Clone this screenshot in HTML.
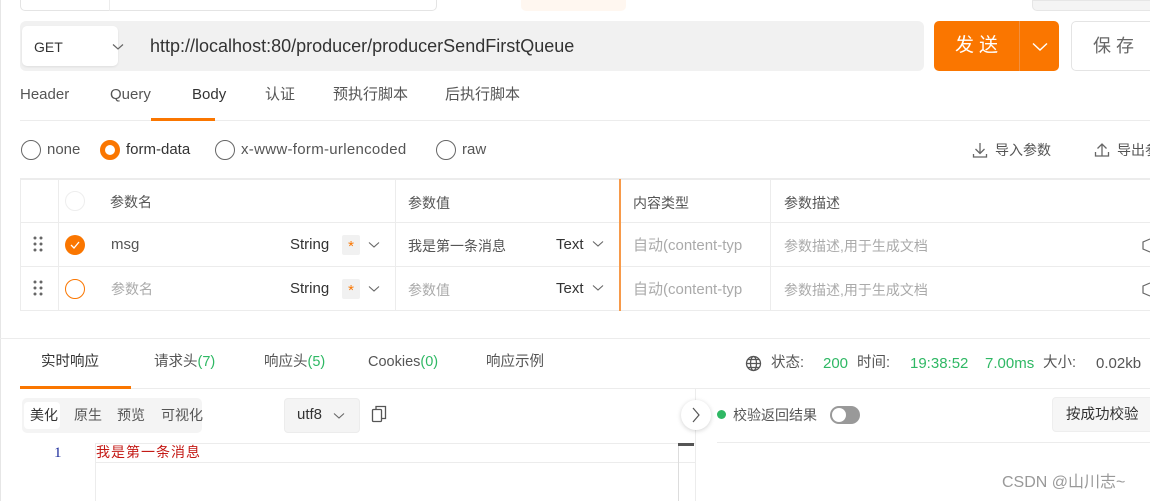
<!DOCTYPE html>
<html><head><meta charset="utf-8"><style>
*{margin:0;padding:0;box-sizing:border-box}
body{width:1150px;height:501px;overflow:hidden;background:#fff;position:relative;font-family:"Liberation Sans","Noto Sans CJK SC",sans-serif;color:#333}
.a{position:absolute;white-space:nowrap;line-height:20px}
.t{font-size:15px;color:#555}
.g{color:#2fb864}
.radio{position:absolute;width:20px;height:20px;border:1.5px solid #666;border-radius:50%}
.hl{position:absolute;height:1px;background:#ececec}
.vl{position:absolute;width:1px;background:#ececec}
.star{position:absolute;width:18px;height:20px;background:#f1f1f1;border-radius:2px;color:#fa7600;font-size:15px;text-align:center;line-height:24px}
.ph{color:#aaa}
</style></head><body>
<div class="vl" style="left:0;top:0;height:501px;background:#e6e6e6"></div>
<div class="a" style="left:20px;top:-6px;width:417px;height:17px;border:1px solid #e4e4e4;border-radius:5px"></div>
<div class="vl" style="left:109px;top:0;height:11px"></div>
<div class="a" style="left:521px;top:0;width:105px;height:11px;background:#fff7f0;border-radius:0 0 5px 5px"></div>
<div class="a" style="left:1032px;top:0;width:130px;height:11px;background:#f4f4f4;border:1px solid #e6e6e6;border-radius:0 0 5px 5px"></div>
<!-- url bar -->
<div class="a" style="left:20px;top:21px;width:904px;height:50px;background:#f1f1f1;border-radius:6px"></div>
<div class="a" style="left:22px;top:26px;width:96px;height:40px;background:#fff;border-radius:5px;box-shadow:0 1px 2px rgba(0,0,0,.08)"></div>
<div class="a" style="left:34px;top:37px;font-size:14px;color:#333">GET</div>
<svg class="a" style="left:112px;top:43px" width="12" height="8"><path d="M1 1.5L6 6L11 1.5" fill="none" stroke="#666" stroke-width="1.2"/></svg>
<div class="a" style="left:150px;top:36px;font-size:18px;color:#333">http://localhost:80/producer/producerSendFirstQueue</div>
<div class="a" style="left:934px;top:21px;width:125px;height:50px;background:#fa7600;border-radius:5px"></div>
<div class="a" style="left:1019px;top:21px;width:1px;height:50px;background:#f19040"></div>
<div class="a" style="left:955px;top:36px;font-size:19px;color:#fff;letter-spacing:5px">发送</div>
<svg class="a" style="left:1032px;top:42px" width="16" height="10"><path d="M1 1.5L8 8L15 1.5" fill="none" stroke="#fff" stroke-width="1.4"/></svg>
<div class="a" style="left:1071px;top:21px;width:100px;height:50px;border:1px solid #e4e4e4;border-radius:5px"></div>
<div class="a" style="left:1093px;top:36px;font-size:18px;color:#666;letter-spacing:5px">保存</div>
<!-- tabs -->
<div class="a t" style="left:20px;top:85px">Header</div>
<div class="a t" style="left:110px;top:85px">Query</div>
<div class="a t" style="left:192px;top:85px;color:#333">Body</div>
<div class="a t" style="left:265px;top:85px">认证</div>
<div class="a t" style="left:333px;top:85px">预执行脚本</div>
<div class="a t" style="left:445px;top:85px">后执行脚本</div>
<div class="hl" style="left:20px;top:120px;width:1130px"></div>
<div class="a" style="left:151px;top:118px;width:64px;height:3px;background:#fa7600"></div>
<!-- radios -->
<div class="radio" style="left:21px;top:140px"></div>
<div class="a t" style="left:47px;top:140px">none</div>
<div class="radio" style="left:100px;top:140px;border:5px solid #fa7600"></div>
<div class="a t" style="left:126px;top:140px;color:#333">form-data</div>
<div class="radio" style="left:215px;top:140px"></div>
<div class="a t" style="left:241px;top:140px;letter-spacing:0.3px">x-www-form-urlencoded</div>
<div class="radio" style="left:436px;top:140px"></div>
<div class="a t" style="left:462px;top:140px">raw</div>
<svg class="a" style="left:972px;top:142px" width="16" height="16"><path d="M8 1V11M3.5 7L8 11.5L12.5 7M1.5 12V15H14.5V12" fill="none" stroke="#666" stroke-width="1.3"/></svg>
<div class="a" style="left:995px;top:140px;font-size:14px;color:#555">导入参数</div>
<svg class="a" style="left:1094px;top:141px" width="16" height="16"><path d="M8 15V4M3.5 7.5L8 3L12.5 7.5M1.5 11V15H14.5V11" fill="none" stroke="#666" stroke-width="1.3"/></svg>
<div class="a" style="left:1117px;top:140px;font-size:14px;color:#555">导出参数</div>
<div class="hl" style="left:20px;top:178px;width:1130px"></div>
<!-- table -->
<div class="a" style="left:20px;top:179px;width:1140px;height:132px;border:1px solid #ececec"></div>
<div class="hl" style="left:20px;top:222px;width:1130px"></div>
<div class="hl" style="left:20px;top:266px;width:1130px"></div>
<div class="vl" style="left:58px;top:179px;height:132px"></div>
<div class="vl" style="left:395px;top:179px;height:132px"></div>
<div class="a" style="left:619px;top:179px;width:2px;height:132px;background:#f79a4a"></div>
<div class="vl" style="left:770px;top:179px;height:132px"></div>
<div class="radio" style="left:65px;top:191px;border:1px solid #eee"></div>
<div class="a" style="left:110px;top:192px;font-size:14px;color:#555">参数名</div>
<div class="a" style="left:408px;top:193px;font-size:14px;color:#555">参数值</div>
<div class="a" style="left:633px;top:193px;font-size:14px;color:#555">内容类型</div>
<div class="a" style="left:784px;top:193px;font-size:14px;color:#555">参数描述</div>
<!-- row1 -->
<svg class="a" style="left:33px;top:236px" width="10" height="16"><g fill="#666"><circle cx="2" cy="2" r="1.5"/><circle cx="8" cy="2" r="1.5"/><circle cx="2" cy="8" r="1.5"/><circle cx="8" cy="8" r="1.5"/><circle cx="2" cy="14" r="1.5"/><circle cx="8" cy="14" r="1.5"/></g></svg>
<div class="a" style="left:65px;top:235px;width:20px;height:20px;border-radius:50%;background:#fa7600"></div>
<svg class="a" style="left:69px;top:240px" width="12" height="10"><path d="M2 5L5 8L10 2" fill="none" stroke="#fff" stroke-width="1.3"/></svg>
<div class="a" style="left:111px;top:235px;font-size:15px;color:#555">msg</div>
<div class="a" style="left:290px;top:235px;font-size:15px;color:#333">String</div>
<div class="star" style="left:342px;top:235px">*</div>
<svg class="a" style="left:368px;top:241px" width="12" height="8"><path d="M1 1.5L6 6L11 1.5" fill="none" stroke="#666" stroke-width="1.1"/></svg>
<div class="a" style="left:408px;top:236px;font-size:14px;color:#555">我是第一条消息</div>
<div class="a" style="left:556px;top:235px;font-size:15px;color:#333">Text</div>
<svg class="a" style="left:592px;top:240px" width="12" height="8"><path d="M1 1.5L6 6L11 1.5" fill="none" stroke="#666" stroke-width="1.1"/></svg>
<div class="a ph" style="left:633px;top:236px;font-size:15px">自动(content-typ</div>
<div class="a ph" style="left:784px;top:236px;font-size:14px">参数描述,用于生成文档</div>
<svg class="a" style="left:1142px;top:237px" width="10" height="16"><path d="M8 2L1 5V12L8 15" fill="none" stroke="#666" stroke-width="1.2"/></svg>
<!-- row2 -->
<svg class="a" style="left:33px;top:280px" width="10" height="16"><g fill="#666"><circle cx="2" cy="2" r="1.5"/><circle cx="8" cy="2" r="1.5"/><circle cx="2" cy="8" r="1.5"/><circle cx="8" cy="8" r="1.5"/><circle cx="2" cy="14" r="1.5"/><circle cx="8" cy="14" r="1.5"/></g></svg>
<div class="radio" style="left:65px;top:279px;border:1.3px solid #fa7600"></div>
<div class="a ph" style="left:111px;top:279px;font-size:14px">参数名</div>
<div class="a" style="left:290px;top:279px;font-size:15px;color:#333">String</div>
<div class="star" style="left:342px;top:279px">*</div>
<svg class="a" style="left:368px;top:285px" width="12" height="8"><path d="M1 1.5L6 6L11 1.5" fill="none" stroke="#666" stroke-width="1.1"/></svg>
<div class="a ph" style="left:408px;top:280px;font-size:14px">参数值</div>
<div class="a" style="left:556px;top:279px;font-size:15px;color:#333">Text</div>
<svg class="a" style="left:592px;top:284px" width="12" height="8"><path d="M1 1.5L6 6L11 1.5" fill="none" stroke="#666" stroke-width="1.1"/></svg>
<div class="a ph" style="left:633px;top:280px;font-size:15px">自动(content-typ</div>
<div class="a ph" style="left:784px;top:280px;font-size:14px">参数描述,用于生成文档</div>
<svg class="a" style="left:1142px;top:281px" width="10" height="16"><path d="M8 2L1 5V12L8 15" fill="none" stroke="#666" stroke-width="1.2"/></svg>
<!-- response -->
<div class="hl" style="left:0;top:338px;width:1150px"></div>
<div class="a" style="left:41px;top:352px;font-size:14.5px;color:#333">实时响应</div>
<div class="a" style="left:154px;top:352px;font-size:14.5px;color:#555">请求头<span class="g">(7)</span></div>
<div class="a" style="left:264px;top:352px;font-size:14.5px;color:#555">响应头<span class="g">(5)</span></div>
<div class="a" style="left:368px;top:352px;font-size:14.5px;color:#555">Cookies<span class="g">(0)</span></div>
<div class="a" style="left:486px;top:352px;font-size:14.5px;color:#555">响应示例</div>
<div class="hl" style="left:20px;top:388px;width:1130px"></div>
<div class="a" style="left:20px;top:386px;width:111px;height:3px;background:#fa7600"></div>
<svg class="a" style="left:745px;top:355px" width="17" height="17"><g fill="none" stroke="#555" stroke-width="1.3"><circle cx="8.5" cy="8.5" r="7"/><ellipse cx="8.5" cy="8.5" rx="3" ry="7"/><path d="M1.5 8.5H15.5M3 4.5H14M3 12.5H14"/></g></svg>
<div class="a" style="left:771px;top:353px;font-size:14.5px;color:#555">状态:</div>
<div class="a g" style="left:823px;top:354px;font-size:15px">200</div>
<div class="a" style="left:857px;top:353px;font-size:14.5px;color:#555">时间:</div>
<div class="a g" style="left:910px;top:354px;font-size:15px">19:38:52</div>
<div class="a g" style="left:985px;top:354px;font-size:15px">7.00ms</div>
<div class="a" style="left:1043px;top:353px;font-size:14.5px;color:#555">大小:</div>
<div class="a" style="left:1096px;top:354px;font-size:15px;color:#555">0.02kb</div>
<!-- toolbar -->
<div class="a" style="left:22px;top:398px;width:180px;height:35px;background:#f4f4f4;border-radius:5px"></div>
<div class="a" style="left:24px;top:402px;width:36px;height:27px;background:#fff;border-radius:4px"></div>
<div class="a" style="left:30px;top:405px;font-size:14px;color:#333">美化</div>
<div class="a" style="left:74px;top:405px;font-size:14px;color:#555">原生</div>
<div class="a" style="left:117px;top:405px;font-size:14px;color:#555">预览</div>
<div class="a" style="left:161px;top:405px;font-size:14px;color:#555">可视化</div>
<div class="a" style="left:284px;top:398px;width:76px;height:35px;background:#f4f4f4;border:1px solid #ececec;border-radius:4px"></div>
<div class="a" style="left:297px;top:405px;font-size:15px;color:#333">utf8</div>
<svg class="a" style="left:333px;top:412px" width="12" height="8"><path d="M1 1.5L6 6L11 1.5" fill="none" stroke="#666" stroke-width="1.1"/></svg>
<svg class="a" style="left:371px;top:405px" width="16" height="18"><g fill="none" stroke="#555" stroke-width="1.3"><rect x="1.5" y="4.5" width="9" height="12" rx="1"/><path d="M5 4.5V1.5H14.5V13.5H10.5"/></g></svg>
<!-- code -->
<div class="hl" style="left:95px;top:443px;width:600px"></div>
<div class="hl" style="left:95px;top:462px;width:600px"></div>
<div class="vl" style="left:95px;top:443px;height:58px"></div>
<div class="vl" style="left:678px;top:443px;height:58px;background:#ddd"></div>
<div class="a" style="left:678px;top:443px;width:16px;height:3px;background:#555"></div>
<div class="vl" style="left:695px;top:388px;height:113px"></div>
<div class="a" style="left:54px;top:443px;font-size:15px;color:#1a2a9a;font-family:'Liberation Serif',serif">1</div>
<div class="a" style="left:96px;top:442px;font-size:14px;color:#c41a16;font-family:'Noto Sans CJK SC',sans-serif;letter-spacing:1px">我是第一条消息</div>
<div class="a" style="left:681px;top:400px;width:30px;height:30px;border-radius:50%;background:#fff;box-shadow:0 1px 5px rgba(0,0,0,.18)"></div>
<svg class="a" style="left:692px;top:407px" width="8" height="16"><path d="M1 1L7 8L1 15" fill="none" stroke="#555" stroke-width="1.2"/></svg>
<!-- right panel -->
<div class="a" style="left:717px;top:410px;width:9px;height:9px;border-radius:50%;background:#2fb864"></div>
<div class="a" style="left:733px;top:405px;font-size:14px;color:#555">校验返回结果</div>
<div class="a" style="left:830px;top:406px;width:30px;height:18px;border-radius:9px;background:#999"></div>
<div class="a" style="left:832px;top:408px;width:14px;height:14px;border-radius:50%;background:#fff"></div>
<div class="a" style="left:1052px;top:397px;width:110px;height:35px;background:#f6f6f6;border:1px solid #eee;border-radius:4px"></div>
<div class="a" style="left:1066px;top:405px;font-size:14.5px;color:#333">按成功校验</div>
<div class="hl" style="left:717px;top:442px;width:433px"></div>
<div class="a" style="left:1002px;top:473px;font-size:16px;color:#999">CSDN @山川志~</div>
</body></html>
